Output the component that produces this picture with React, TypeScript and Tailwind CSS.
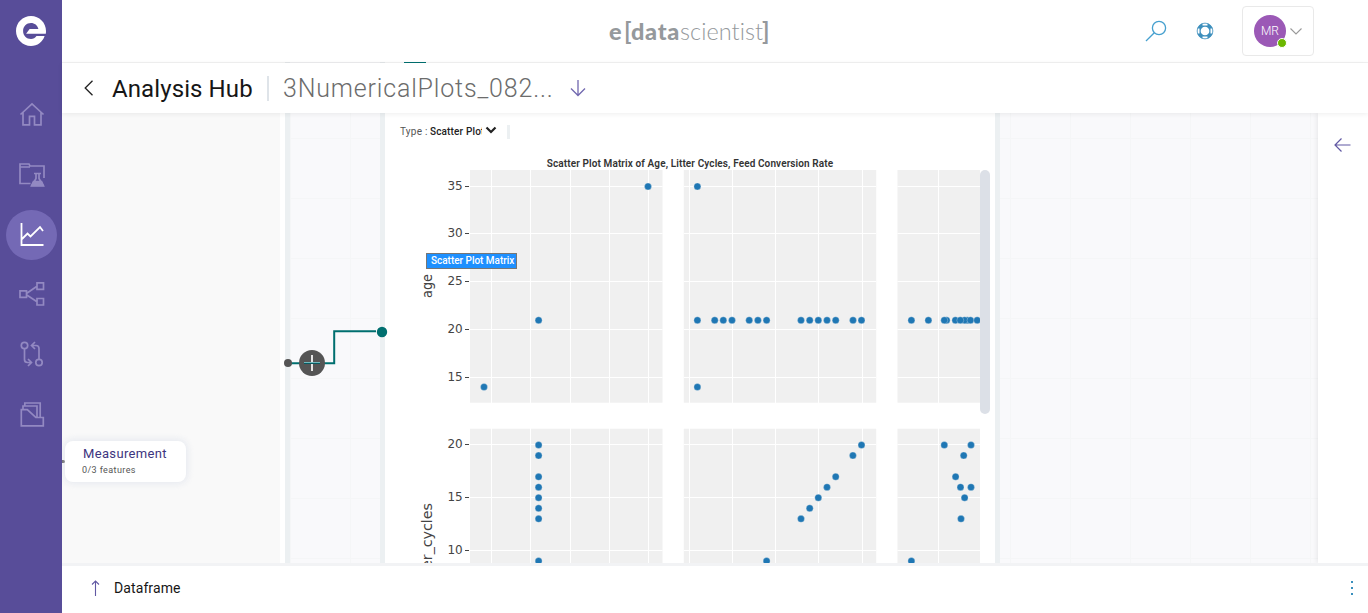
import React from "react";

const rowOneY = [186.5, 233.5, 281.5, 329.5, 377.5];
const rowTwoY = [444.5, 497.5, 550.5];
const columns = [
  { x: 470, w: 192.5, lines: [491.5, 530.5, 570.5, 609.5, 648.5] },
  { x: 683.8, w: 192.4, lines: [689.5, 732.5, 775.5, 818.5, 862.5] },
  { x: 897.5, w: 82.5, lines: [938.5] },
];
const dots: [number, number][] = [
  [648, 186.5], [538.6, 320.3], [484, 387], [697.4, 186.5], [697.4, 387],
  ...[697.4, 714.7, 723.3, 732, 749.2, 757.9, 766.6, 801, 809.7, 818.3, 827, 835.7, 853, 861.5].map(
    (x): [number, number] => [x, 320.3],
  ),
  ...[911.4, 928.4, 946.6, 944.3, 955.4, 967.3, 964.5, 960.3, 970.5, 977.2].map((x): [number, number] => [x, 320.3]),
  ...[445, 455.6, 476.8, 487.2, 497.7, 508.3, 518.8, 561].map((y): [number, number] => [538.6, y]),
  [861.5, 445], [852.9, 455.5], [835.7, 476.7], [827, 487.2], [818.3, 497.7], [809.7, 508.3], [801, 518.8], [766.6, 561],
  [944.3, 445], [971, 445], [963.7, 455.5], [955.6, 476.7], [960.5, 487.2], [971, 487.2], [964.6, 497.7], [961, 518.8], [911.4, 561],
];
const ticks: [string, number][] = [
  ["35", 186.5], ["30", 233.5], ["25", 281.5], ["20", 329.5], ["15", 377.5],
  ["20", 444.5], ["15", 497.5], ["10", 550.5],
];

function ScatterMatrix() {
  return (
    <svg width="610" height="393" viewBox="385 170 610 393" className="block shrink-0 overflow-hidden">
      {columns.map((c) => (
        <g key={c.x}>
          <rect x={c.x} y="170" width={c.w} height="232.7" fill="#f0f0f0" />
          <rect x={c.x} y="428.7" width={c.w} height="140" fill="#f0f0f0" />
          <g stroke="#fff" strokeWidth="1">
            {c.lines.map((x) => <path key={x} d={`M${x} 170V563`} />)}
            {[...rowOneY, ...rowTwoY].map((y) => <path key={y} d={`M${c.x} ${y}h${c.w}`} />)}
          </g>
        </g>
      ))}
      {ticks.map(([label, y]) => (
        <g key={y}>
          <path d={`M465 ${y}h4`} stroke="#444" />
          <text x="462.7" y={y + 3.7} textAnchor="end" fontSize="12" fill="#444" className="font-['DejaVu_Sans',sans-serif]">{label}</text>
        </g>
      ))}
      <g fontSize="13.500" fill="#444" className="font-['DejaVu_Sans',sans-serif]">
        <text transform="translate(431.5 298)  rotate(-90)" textLength="24" lengthAdjust="spacingAndGlyphs">age</text>
        <text transform="translate(431.5 588) rotate(-90)" textLength="85" lengthAdjust="spacingAndGlyphs">litter_cycles</text>
      </g>
      <g fill="#1f77b4">
        {dots.map(([x, y], i) => (
          <circle key={i} cx={x} cy={y} r="3.5" stroke="#f0f0f0" strokeWidth="0.3" />
        ))}
      </g>
      <rect x="980" y="170" width="10" height="244" rx="5" fill="#dce0e7" />
    </svg>
  );
}

function NavIcon({ children, active = false }: { children: React.ReactNode; active?: boolean }) {
  return (
    <div className={active ? "flex h-[50px] w-[51px] items-center justify-center rounded-full bg-[#7469b5] text-white" : "flex h-[50px] w-[51px] items-center justify-center text-[#9389c2]"}>
      <svg width="26" height="26" viewBox="0 0 26 26" fill="none" stroke="currentColor" strokeWidth={active ? 1.8 : 1.7}>{children}</svg>
    </div>
  );
}

function Sidebar() {
  return (
    <nav className="flex h-full w-[62px] shrink-0 flex-col items-center bg-[#584d99] pt-4">
      <svg width="30" height="30" viewBox="0 0 30 30" className="mb-[44px] shrink-0">
        <path fill="#fff" fillRule="evenodd" d="M29.8 17.700H10.100L13.600 13h8.800C21.500 9.200 18.500 7 15 7c-4.500 0-7.900 3.500-7.900 8s3.400 8 7.900 8c2.300 0 4.200-1 5.500-3h8.100c-1.900 6-7.200 10-13.600 10C6.700 30 0 23.300 0 15S6.700 0 15 0s15 6.700 15 15c0 .9 0 1.800-.2 2.700z" />
      </svg>
      <div className="flex flex-col gap-[9.800px] pl-px">
        <NavIcon><path d="M1.500 12.500 13 1.800 24.500 12.500M4 10.500V22.800h6.500v-8.500h5v8.500H22V10.500" /></NavIcon>
        <NavIcon>
          <path d="M11.500 21.500H1V2h9l1 2h14v12M1 5h10M15 11.500h7M17 12v4.500l-4 7h11l-4-7V12" />
          <path d="M14.500 19.500h8l2 4.500H12.500z" fill="currentColor" />
        </NavIcon>
        <NavIcon active><path d="M2.500 1v22h22M3 17l5.500-5.500 3 3L21 5l3 4" /></NavIcon>
        <NavIcon><path d="M1 9.800h6.500v6.500H1zM18 1.800h6.500v6.500H18zM18 17.500h6.500V24H18zM7.800 12.200 18 5.300M7.800 14 18 20.700" /></NavIcon>
        <NavIcon>
          <circle cx="5.500" cy="4.500" r="3.200" /><circle cx="20" cy="21.500" r="3.200" />
          <path d="M5.500 8v10.500q0 3 3 3h4M9 18l3.500 3.500L9 25M20 18V7.500q0-3-3-3h-4.500M16 1l-3.500 3.500L16 8" />
        </NavIcon>
        <NavIcon><path d="M2.300 8.700h6l8.500 7.800h7.500v8.300h-22zM4 8.500V5h14v11.500M5.800 5V2h15.400v14.500" /></NavIcon>
      </div>
    </nav>
  );
}

function Header() {
  return (
    <header className="flex h-[62px] shrink-0 items-center">
      <div className="w-[547px] shrink-0" />
      <div className="flex h-[34px] w-[400px] items-center whitespace-nowrap font-['Lato',sans-serif] text-[23.500px] leading-[34px] text-[#95999c]">
        <span className="w-[15px] font-black">e</span>
        <span className="w-[7px] text-[24px] font-bold">[</span>
        <span className="w-[49px] font-black tracking-[0.7px]">data</span>
        <span className="w-[82px] font-light tracking-[0.05px]">scientist</span>
        <span className="text-[24px] font-bold">]</span>
      </div>
      <svg width="22" height="22" viewBox="0 0 22 22" fill="none" stroke="#46a0cf" strokeWidth="1.3" className="ml-[136px]">
        <circle cx="14" cy="8" r="6.600" /><path d="M9.300 12.700 1 21" />
      </svg>
      <svg width="18" height="18" viewBox="0 0 18 18" fill="none" className="ml-[29px]">
        <circle cx="9" cy="9" r="6.200" stroke="#3d8fbd" strokeWidth="3.700" />
        <path d="M6.500 2.400h5M6.500 15.600h5M2.400 6.500v5M15.600 6.500v5" stroke="#fff" strokeWidth="2.200" />
        <circle cx="9" cy="9" r="7.900" stroke="#3d8fbd" strokeWidth=".7" />
      </svg>
      <div className="ml-7 flex h-[50px] w-[72px] items-center rounded-[4px] border border-[#e9e9e9] pl-[11px]">
        <div className="relative flex size-8 items-center justify-center rounded-full bg-[#9b59b6] font-['Roboto',sans-serif] text-[12px] font-light text-white">
          MR
          <span className="absolute -bottom-px -right-px size-[10px] rounded-full border border-white bg-[#6bb700]" />
        </div>
        <svg width="12" height="7" viewBox="0 0 12 7" fill="none" stroke="#999" strokeWidth="1.1" className="ml-1"><path d="m.5.500 5.500 5.500L11.500.500" /></svg>
      </div>
    </header>
  );
}

const grid = "bg-[#f9f9fb] bg-[linear-gradient(to_right,#f5f6f7_1px,transparent_1px),linear-gradient(to_bottom,#f5f6f7_1px,transparent_1px)] bg-[size:60px_60px]";

export default function App() {
  return (
    <div className="flex h-[613px] w-[1368px] overflow-hidden bg-white font-['Roboto',sans-serif]">
      <Sidebar />
      <div className="flex min-w-0 flex-1 flex-col">
        <Header />
        <div className="flex h-px shrink-0 bg-[#f2f2f2]">
          <div className="ml-[223px] w-[5px] bg-[#e2e5e7]" />
          <div className="w-[90px] bg-[#ececee]" />
          <div className="w-[5px] bg-[#e2e5e7]" />
          <div className="ml-[19px] w-[22px] bg-[#006f6f]" />
        </div>
        <div className="relative z-10 flex h-[50px] shrink-0 items-center whitespace-nowrap bg-white shadow-[0_1px_5px_rgba(0,0,0,0.07)]">
          <svg width="10" height="16" viewBox="0 0 10 16" fill="none" stroke="#222" strokeWidth="1.3" className="ml-[22px]"><path d="M8.500.700 1.200 8l7.300 7.300" /></svg>
          <h1 className="ml-[18px] w-[155px] pt-[2px] text-[24px] tracking-[0.1px] text-[#161616]">Analysis Hub</h1>
          <div className="h-[25px] w-[2px] bg-[#dfe4e9]" />
          <span className="ml-[14px] w-[287px] pt-[2px] text-[25px] font-light tracking-[0.82px] text-[#6c6c6c]">3NumericalPlots_082...</span>
          <svg width="16" height="18" viewBox="0 0 16 18" fill="none" stroke="#7168af" strokeWidth="1.3"><path d="M8 1v15.500M1 9.500l7 7 7-7" /></svg>
        </div>
        <main className="relative flex h-[450px] shrink-0 overflow-hidden">
          <div className="w-[218px] bg-[#f9f9f9]" />
          <div className="w-[5px]" />
          <div className="w-[5px] bg-[#ecf0f2]" />
          <div className={grid + " w-[90px] bg-[position:0_25px]"} />
          <div className="w-[5px] bg-[#ecf0f2]" />
          <section className="flex w-[610px] flex-col">
            <div className="flex h-[37px] items-center pl-[15px] text-[10px] text-[#222]">
              <span className="w-[30px] tracking-[0.25px] text-[#555]">Type :</span>
              <span className="w-[52px] overflow-hidden whitespace-nowrap font-medium tracking-[0.15px]">Scatter Plot Matrix</span>
              <svg width="12" height="8" viewBox="0 0 12 8" fill="none" stroke="#222" strokeWidth="2.200" className="mb-[3px] ml-[3px]"><path d="m1.500 1.500 4.500 4.500 4.500-4.500" /></svg>
              <div className="ml-[10px] h-[14px] w-[3px] bg-[#ecf0f2]" />
            </div>
            <h2 className="flex h-5 items-center justify-center pt-[7px] text-[10px] font-semibold tracking-[0.11px] text-[#333]">Scatter Plot Matrix of Age, Litter Cycles, Feed Conversion Rate</h2>
            <ScatterMatrix />
          </section>
          <div className="w-[5px] bg-[#ecf0f2]" />
          <div className={grid + " w-[318px] bg-[position:10px_25px]"} />
          <aside className="w-[50px] bg-white pl-4 pt-[25px] shadow-[-1px_0_5px_rgba(0,0,0,0.08)]">
            <svg width="17" height="15" viewBox="0 0 17 15" fill="none" stroke="#6158a3" strokeWidth="1.2"><path d="M16.500 7H1M7.500.500 1 7l6.500 6.500" /></svg>
          </aside>

          <svg width="110" height="60" viewBox="280 320 110 60" className="absolute left-[218px] top-[207px]">
            <path d="M290 363.300h44.200v-32H376" fill="none" stroke="#006f6f" strokeWidth="2" />
            <circle cx="288" cy="363" r="4" fill="#555" />
            <circle cx="382" cy="332" r="5.200" fill="#006f6f" />
            <circle cx="312" cy="363" r="13" fill="#555" />
            <path d="M312 355v16" stroke="#fff" strokeWidth="1.700" />
            <path d="M304 362.500h16" stroke="#70b8bd" strokeWidth="1" /><path d="M304 363.500h16" stroke="#075c62" strokeWidth="1" />
          </svg>
          <div className="absolute left-0 top-[347px] h-[3px] w-[2.500px] rounded-r-full bg-[#555]" />
          <div className="absolute left-[3px] top-[328px] flex h-[41px] w-[121px] flex-col rounded-[8px] bg-white pl-[17px] pt-[4px] shadow-[0_0_6px_2px_rgba(220,225,235,0.6)]">
            <span className="pl-[1px] text-[13px] leading-[18px] tracking-[0.35px] text-[#3d3580]">Measurement</span>
            <span className="pt-px text-[9px] leading-[13px] tracking-[0.4px] text-[#555]">0/3 features</span>
          </div>
          <div className="absolute left-[364px] top-[140px] flex h-4 w-[91px] items-center whitespace-nowrap border border-[#767676] bg-[#1e90ff] pb-px pl-1 text-[10px] font-medium tracking-[-0.02px] text-white">Scatter Plot Matrix</div>
        </main>
        <footer className="flex h-[50px] shrink-0 items-center border-t-[3px] border-[#f2f3f5] pb-[3px] text-[14px] text-[#161616]">
          <svg width="9" height="16" viewBox="0 0 9 16" fill="none" stroke="#6158a3" strokeWidth="1.1" className="ml-[29px]"><path d="M4.500 16V1M1 4.500 4.500 1 8 4.500" /></svg>
          <span className="ml-[14px] tracking-[0.1px]">Dataframe</span>
          <svg width="4" height="16" viewBox="0 0 4 16" fill="#398fbd" className="ml-auto mr-[14px]"><path d="M1 1h2v2H1zM1 7h2v2H1zM1 13h2v2H1z" /></svg>
        </footer>
      </div>
    </div>
  );
}
